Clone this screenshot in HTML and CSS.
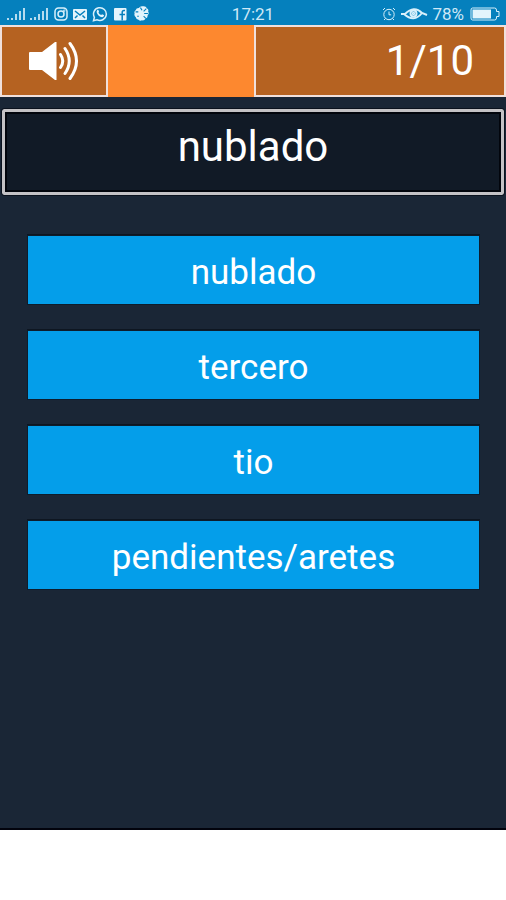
FILE: index.html
```html
<!DOCTYPE html>
<html lang="es">
<head>
<meta charset="utf-8">
<meta name="viewport" content="width=device-width, initial-scale=1">
<title>nublado</title>
<link rel="stylesheet" href="styles.css">
</head>
<body>
<div class="app">
  <header class="status">
    <div class="status-side">
      <svg class="signal" viewBox="0 0 20 14"><path d="M1 11h2v2H1zM5 11h2v2H5zM9 7h2v6H9zM13 4h2v9h-2zM17 1h2v12h-2z"/></svg>
      <svg class="signal" viewBox="0 0 20 14"><path d="M1 11h2v2H1zM5 10h2v3H5zM9 7h2v6H9zM13 4h2v9h-2zM17 1h2v12h-2z"/></svg>
      <svg class="icon line instagram" viewBox="0 0 14 14"><rect x="1" y="1" width="12" height="12" rx="3.5"/><circle cx="7" cy="7" r="3"/><circle cx="10.3" cy="3.7" r=".4"/></svg>
      <svg class="icon mail" viewBox="0 0 14 14"><rect x="0" y="2" width="14" height="11" rx="1"/><path class="cut-line" d="M2 4l5 4 5-4M2 11l2.500-2.500M12 11L9.500 8.500"/></svg>
      <svg class="icon whatsapp" viewBox="0 0 16 16"><path class="ring" d="M1.500 14.700l.9-3.400a6.400 6.400 0 1 1 2.500 2.400z"/><path d="M5.300 4.100c.6-.5 1-.3 1.200.2l.5 1.200c.1.400-.6.900-.5 1.200.6 1.100 1.500 1.900 2.700 2.400.4.100.8-.9 1.200-.7l1.500.7c.3.300 0 1.300-.6 1.700-1.200.8-3.100.1-4.800-1.400C4.800 7.900 3.900 5.500 5.300 4.100z"/></svg>
      <svg class="icon facebook" viewBox="0 0 14 14"><rect x="1" y="1" width="12.500" height="12.500" rx="1"/><path class="cut-line" d="M12 3.500h-1q-1.800 0-1.800 2v8M6.500 7.500H12"/></svg>
      <svg class="icon palette" viewBox="0 0 14 14"><path d="M8 .3q3-.6 4 1.700 2 1 1.200 3.200 1.200 1.800-.4 3.300.2 2.500-2 3.200-1 2-3.300 1.700-2 1-3.300-.6-2.200 0-2.500-2.200Q-.2 9 .6 7-.2 5 1.500 3.900 2.200 1.700 4.500 1.800 5.800 0 8 .3z"/><path class="cut-line" d="M6 1.500l1.500 2.500M11.500 2.500L9 5M13 7H9.500M1.500 5.500H4M3 9.500h1.500M9 9.500l2 2"/></svg>
    </div>
    <time class="clock">17:21</time>
    <div class="status-side status-end">
      <svg class="icon line alarm" viewBox="0 0 14 14"><circle cx="7" cy="7.500" r="5.200"/><path d="M7 4.500v3.300h2.200M1 3l2-2M13 3l-2-2M3.500 11.500L2 13M10.500 11.500L12 13"/></svg>
      <svg class="eye" viewBox="0 0 28 14"><path d="M1 7h4Q14-2 22 6l5 2M4 7q10 9 18-1"/><circle cx="13.500" cy="6.500" r="3"/><circle cx="13.500" cy="6.500" r=".7"/></svg>
      <span class="percent">78%</span>
      <svg class="battery" viewBox="0 0 30 14"><path class="shell" d="M2.500 1h22q2 0 2 2v1.500H29v5h-2.500V11q0 2-2 2h-22q-1.500 0-1.500-2V3q0-2 1.500-2z"/><path d="M2.500 2.500H21v9H2.500z"/></svg>
    </div>
  </header>
  <div class="toolbar">
    <button class="sound" type="button" aria-label="Escuchar">
      <svg viewBox="0 0 50 40"><path d="M0 12q0-1 1-1h12L26 1h1.500v38H26L13 29H1q-1 0-1-1z"/><path class="wave" d="M31.500 13.500q4.500 6.500 0 13M36 7.500q8.500 12.500 0 25M41 2.500q13 17.500 0 35"/></svg>
    </button>
    <div class="count">1/10</div>
  </div>
  <main>
    <h1 class="word">nublado</h1>
    <div class="answers">
      <button class="answer" type="button">nublado</button>
      <button class="answer" type="button">tercero</button>
      <button class="answer" type="button">tio</button>
      <button class="answer" type="button">pendientes/aretes</button>
    </div>
  </main>
</div>
</body>
</html>
```

FILE: styles.css
```css
* {
  box-sizing: border-box;
}

body {
  display: flex;
  flex-direction: column;
  min-height: 100vh;
  margin: 0;
  padding-bottom: 70px;
  background: #fff;
  color: #fff;
  font-family: Roboto, "Liberation Sans", sans-serif;
}

button {
  margin: 0;
  padding: 0;
  border: 0;
  color: inherit;
  font: inherit;
}

.app {
  flex: 1;
  background: #1a2636;
  border-bottom: 2px solid #02030d;
}

.status {
  display: grid;
  grid-template-columns: 1fr auto 1fr;
  align-items: center;
  height: 25px;
  padding: 2px 6px 0;
  background: #0580bd;
  color: #cfe9f7;
  font-size: 17px;
  line-height: 22px;
}

.status-side {
  display: flex;
  align-items: center;
  gap: 5px;
}

.status-end {
  justify-content: flex-end;
  gap: 4px;
}

.status svg {
  flex: none;
  height: 14px;
  fill: #e3f4fc;
}

.signal {
  width: 20px;
  opacity: 0.8;
}

.signal + .signal {
  margin-left: -2px;
}

.icon {
  width: 14px;
}

.status .whatsapp {
  width: 16px;
  height: 16px;
}

.status .palette {
  width: 15px;
  height: 15px;
  margin-left: 2px;
}

.status .line,
.status .eye,
.status .ring,
.status .shell {
  fill: none;
  stroke: #d9f0fb;
  stroke-width: 1.5;
}

.status .eye {
  stroke-width: 2;
}

.status .alarm,
.status .shell {
  stroke-width: 1;
}

.status .cut-line {
  fill: none;
  stroke: #0580bd;
  stroke-width: 1.5;
}

.status .palette .cut-line {
  stroke-width: 1;
}

.eye {
  width: 28px;
}

.battery {
  width: 30px;
  margin-left: 2px;
}

.toolbar {
  display: grid;
  grid-template-columns: 108px 1fr 252px;
  height: 72px;
  background: #fd882f;
}

.sound,
.count {
  display: flex;
  align-items: center;
  background: #b56221;
  border: 2px solid #f0e0dc;
}

.sound {
  justify-content: center;
}

.sound svg {
  width: 50px;
  height: 40px;
  fill: #fff;
}

.sound .wave {
  fill: none;
  stroke: #fff;
  stroke-width: 3;
  stroke-linecap: round;
}

.count {
  grid-column: 3;
  justify-content: flex-end;
  padding-right: 30px;
  font-size: 42px;
  line-height: 48px;
}

main {
  padding: 12px 2px 28px;
}

.word {
  height: 86px;
  margin: 0;
  padding-top: 9px;
  border: 3px solid #c4c2c5;
  border-radius: 2px;
  outline: 1px solid #0b121e;
  background: #111a26;
  box-shadow: inset 0 0 0 2px #02050c;
  font-size: 42px;
  font-weight: 400;
  line-height: 52px;
  text-align: center;
}

.answers {
  display: grid;
  gap: 27px;
  padding: 41px 25px 0 26px;
}

.answer {
  height: 68px;
  padding-top: 6px;
  background: #049eea;
  box-shadow: 0 0 0 1px #0e1d2c, 0 -1px 0 1px #0e1621;
  font-size: 35px;
  line-height: 44px;
}
```
